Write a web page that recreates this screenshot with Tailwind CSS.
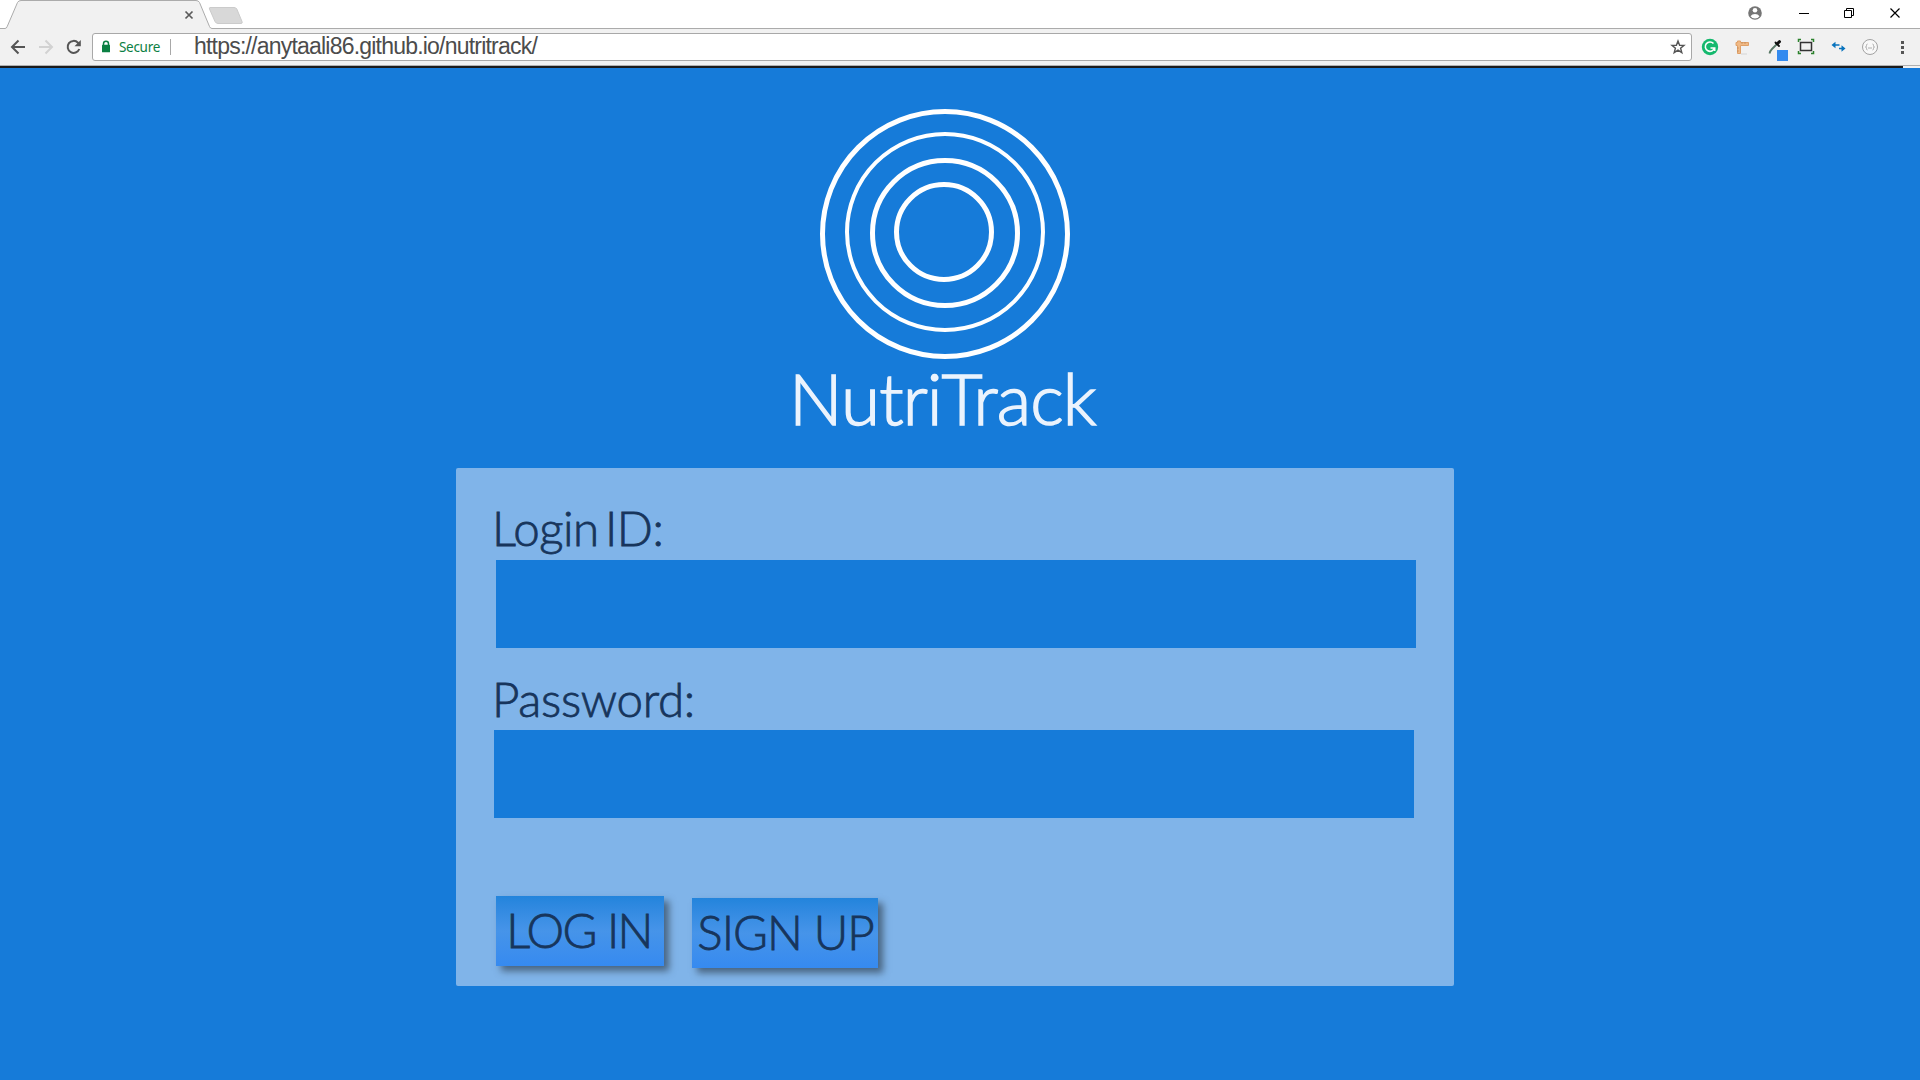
<!DOCTYPE html>
<html lang="en">
<head>
<meta charset="utf-8">
<title>NutriTrack</title>
<script src="https://cdn.jsdelivr.net/npm/@tailwindcss/browser@4"></script>
</head>
<body class="flex h-[1080px] w-[1920px] flex-col overflow-hidden bg-[#167bd9]">
<header class="h-[68px] shrink-0 bg-[#f1f1f1]">
  <div class="flex h-[29px] items-start justify-between bg-white">
    <svg class="h-[29px] w-[260px]" viewBox="0 0 260 29" fill="none">
      <path d="M0 28.500H6L18 2.500Q19 .5 21 .5H196Q198 .5 199 2.500L210.500 28.500H260V29H0Z" fill="#f1f1f1"/>
      <path d="M0 28.500H5Q6.500 28.500 7.200 26.500L17.500 2.500Q18.500 .5 21 .5H196Q198.500 .5 199.500 2.500L209.500 26.500Q210.300 28.500 212 28.500H260" stroke="#ababab"/>
      <path d="M185.500 11.500L192.500 18.500M192.500 11.500L185.500 18.500" stroke="#5a5a5a" stroke-width="1.700"/>
      <path d="M210 7.500H234Q236 7.500 236.800 9L242 21.500Q242.800 23.500 241 23.500H218Q216 23.500 215 21.500L209.500 9Q209 7.500 210 7.500Z" fill="#d8d8d8" stroke="#cbcbcb"/>
    </svg>
    <div class="h-px flex-1 self-end bg-[#ababab]"></div>
    <svg class="h-[29px] w-[180px]" viewBox="0 0 180 29" fill="none">
      <path d="M0 28.500H180" stroke="#ababab"/>
      <circle cx="15" cy="13" r="6.800" fill="#757575"/>
      <circle cx="15" cy="10.300" r="2.300" fill="#fff"/>
      <path d="M10.500 16.200Q12 13.900 15 13.900T19.500 16.200Q18 18.600 15 18.600T10.500 16.200Z" fill="#fff"/>
      <path d="M59 13.500H69M104.500 10.500H111.500V17.500H104.500ZM106.500 10V8.500H113.500V15.500H112" stroke="#000"/>
      <path d="M150.500 8.500L159.500 17.500M159.500 8.500L150.500 17.500" stroke="#000" stroke-width="1.200"/>
    </svg>
  </div>
  <div class="flex h-[36px] items-center">
    <svg class="h-[36px] w-[92px]" viewBox="0 0 92 36" fill="none" stroke-width="2">
      <path d="M25 18H12.500M18.500 11.500L12 18L18.500 24.500" stroke="#555"/>
      <path d="M39 18H51.500M45.500 11.500L52 18L45.500 24.500" stroke="#d2d2d2"/>
      <path d="M79.300 20A6 6 0 1 1 78 13.700L79.500 15.300" stroke="#555"/>
      <path d="M80.800 11V17.300H74.500Z" fill="#555"/>
    </svg>
    <div class="flex h-[28px] w-[1600px] items-center rounded-[3px] border border-[#a8a8a8] bg-white">
      <svg class="ml-[8px] h-[14px] w-[10px]" viewBox="0 0 10 14" fill="none">
        <path d="M2.500 6V3.800A2.500 2.500 0 0 1 7.500 3.800V6" stroke="#0b8043" stroke-width="1.500"/>
        <rect x="1" y="4.800" width="8" height="7.500" rx=".6" fill="#0b8043"/>
      </svg>
      <span class="mt-px ml-[8px] w-[51px] font-['Noto_Sans'] text-[13.5px] leading-none tracking-[-0.3px] text-[#0b8043]">Secure</span>
      <span class="h-[16px] w-px bg-[#a8a8a8]"></span>
      <span class="-mt-[2px] ml-[23px] flex-1 whitespace-nowrap font-['Liberation_Sans'] text-[23px] leading-none tracking-[-0.79px] text-[#4c4c4c]">https://anytaali86.github.io/nutritrack/</span>
      <svg class="mr-[5px] h-[16px] w-[16px]" viewBox="0 0 16 16" fill="none">
        <path d="M8 2L9.600 6.200L14 6.400L10.600 9.200L11.800 13.600L8 11.100L4.200 13.600L5.400 9.200L2 6.400L6.400 6.200Z" stroke="#555" stroke-width="1.400"/>
      </svg>
    </div>
    <svg class="h-[36px] w-[228px]" viewBox="0 0 228 36" fill="none">
      <circle cx="18" cy="18" r="8.200" fill="#15b96e"/>
      <path d="M21.500 14.500A4.700 4.700 0 1 0 22.500 19H18.500M22.700 18.500V22" stroke="#fff" stroke-width="1.600"/>
      <path d="M45.500 12H48.500V13.500H56.500V16.500H48.500V24.500H45.500V16.500H44V13.500H45.500Z" fill="#f0b985" stroke="#dfa069"/>
      <path d="M50 13V15M53 13V15M45 19H47M45 22H47" stroke="#b98250" stroke-width=".6"/>
      <path d="M49 25H55" stroke="#d5d5d5"/>
      <path d="M77.500 24.500Q78 22 80 20L85 15" stroke="#587865" stroke-width="1.800"/>
      <path d="M83.500 13.500L87 17" stroke="#111" stroke-width="1.800" stroke-linecap="round"/>
      <path d="M85.500 14.500L87.500 12.700" stroke="#111" stroke-width="3" stroke-linecap="round"/>
      <rect x="85" y="21" width="11" height="11" fill="#348bef"/>
      <rect x="108.500" y="13.500" width="11" height="8" stroke="#333" stroke-width="1.500"/>
      <path d="M106.500 13V10.500H109M119 10.500H121.500V13M121.500 22V24.500H119M109 24.500H106.500V22" stroke="#2c822d" stroke-width="1.500"/>
      <path d="M142 16H147.500M147 19.500H152" stroke="#0873bd" stroke-width="1.500"/>
      <path d="M143.500 12.800V19.200L139.500 16ZM149.500 16.300V22.700L153.500 19.500Z" fill="#0873bd"/>
      <circle cx="178" cy="18" r="7.500" fill="#f8f8f8" stroke="#a2a2a2"/>
      <path d="M175.500 15Q174.500 15 174.500 16.500Q174.500 18 173.500 18Q174.500 18 174.500 19.500Q174.500 21 175.500 21M180.500 15Q181.500 15 181.500 16.500Q181.500 18 182.500 18Q181.500 18 181.500 19.500Q181.500 21 180.500 21M176 19H180" stroke="#999" stroke-width=".8"/>
      <path d="M209 12H212V15H209ZM209 17H212V20H209ZM209 22H212V25H209Z" fill="#555"/>
    </svg>
  </div>
  <div class="h-px bg-[#b0b0b0]"></div>
  <div class="h-[2px] w-[1903px] bg-[#1b1b1b]"></div>
</header>
<main class="flex flex-col">
  <svg class="mt-[41px] ml-[820px] h-[250px] w-[250px]" viewBox="0 0 250 250" fill="none" stroke="#fff" stroke-width="5">
    <circle cx="125" cy="125" r="122.500"/>
    <circle cx="125" cy="123" r="98" stroke-width="4"/>
    <circle cx="125" cy="124" r="72.500"/>
    <circle cx="124" cy="123" r="47.500"/>
  </svg>
  <h1 class="ml-[789px] h-[109px] whitespace-nowrap font-['Lato'] text-[71px] leading-[77px] font-light tracking-[-0.9px] text-[#ebf3fd] [-webkit-text-stroke:1.5px_#ebf3fd]">NutriTrack</h1>
  <form class="ml-[456px] flex h-[518px] w-[998px] flex-col rounded-[2px] bg-[#80b4e9] font-['Lato'] text-[47.5px] font-light text-[#17355c] [-webkit-text-stroke:0.8px_#17355c]">
    <label class="mt-[31px] ml-[36px] h-[61px] leading-[57px] tracking-[-0.5px] [word-spacing:-6px]">Login ID:</label>
    <div class="ml-[40px] h-[88px] w-[920px] bg-[#167bd9]"></div>
    <label class="mt-[23px] ml-[36px] h-[59px] leading-[56px] tracking-[-0.3px]">Password:</label>
    <div class="ml-[38px] h-[88px] w-[920px] bg-[#167bd9]"></div>
    <div class="mt-[78px] ml-[40px] flex gap-[28px]">
      <button type="button" class="h-[70px] w-[168px] bg-linear-to-b from-[#2284dc] via-[#4694e9] to-[#368af0] pr-[2px] pb-[3px] leading-[66px] tracking-[-1.7px] whitespace-nowrap shadow-[5px_5px_7px_rgba(55,75,95,0.75)]">LOG IN</button>
      <button type="button" class="mt-[2px] h-[70px] w-[186px] bg-linear-to-b from-[#2284dc] via-[#4694e9] to-[#368af0] pb-[3px] pl-px leading-[66px] tracking-[-1px] whitespace-nowrap shadow-[5px_5px_7px_rgba(55,75,95,0.75)]">SIGN UP</button>
    </div>
  </form>
</main>
</body>
</html>
